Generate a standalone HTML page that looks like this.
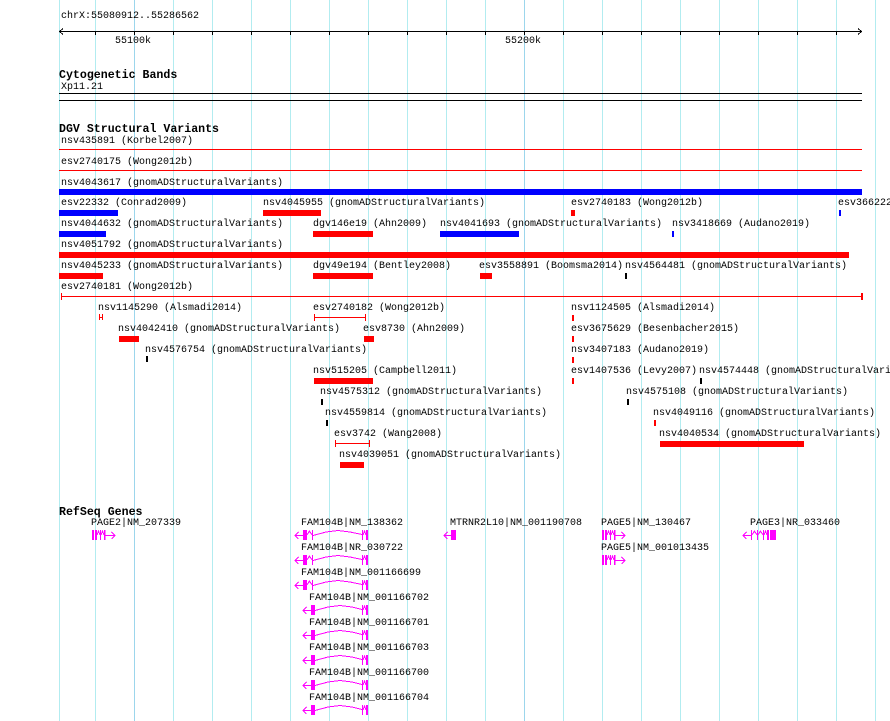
<!DOCTYPE html>
<html><head><meta charset="utf-8"><style>
html,body{margin:0;padding:0;background:#fff;}
body{width:890px;height:721px;position:relative;overflow:hidden;font-family:"Liberation Mono",monospace;font-size:10px;color:#000;}
.t{position:absolute;line-height:12px;white-space:nowrap;margin-top:2px;}
.h{position:absolute;line-height:14px;white-space:nowrap;font-weight:bold;font-size:11.6px;margin-top:2px;}
.b{position:absolute;}
.g{position:absolute;top:0;height:721px;width:1px;background:#b2ecf0;}
.G{position:absolute;top:0;height:721px;width:1px;background:#9cd6ec;}
.r{background:#f00}.u{background:#00f}.k{background:#000}
</style></head><body>
<div class="g" style="left:59px"></div>
<div class="g" style="left:95px"></div>
<div class="G" style="left:134px"></div>
<div class="g" style="left:173px"></div>
<div class="g" style="left:212px"></div>
<div class="g" style="left:251px"></div>
<div class="g" style="left:290px"></div>
<div class="g" style="left:329px"></div>
<div class="g" style="left:368px"></div>
<div class="g" style="left:407px"></div>
<div class="g" style="left:446px"></div>
<div class="g" style="left:485px"></div>
<div class="G" style="left:524px"></div>
<div class="g" style="left:563px"></div>
<div class="g" style="left:602px"></div>
<div class="g" style="left:641px"></div>
<div class="g" style="left:680px"></div>
<div class="g" style="left:719px"></div>
<div class="g" style="left:758px"></div>
<div class="g" style="left:797px"></div>
<div class="g" style="left:836px"></div>
<div class="g" style="left:875px"></div>

<svg class="b" style="left:0;top:0" width="890" height="721">
<g stroke="#000" stroke-width="1" fill="none" shape-rendering="crispEdges">
<line x1="59" y1="31.5" x2="862" y2="31.5"/>
<polyline points="63,28.5 59.5,31.5 63,34.5"/>
<polyline points="858,28.5 861.5,31.5 858,34.5"/>
<path d="M95.5 32v3M134.5 32v3M173.5 32v3M212.5 32v3M251.5 32v3M290.5 32v3M329.5 32v3M368.5 32v3M407.5 32v3M446.5 32v3M485.5 32v3M524.5 32v3M563.5 32v3M602.5 32v3M641.5 32v3M680.5 32v3M719.5 32v3M758.5 32v3M797.5 32v3M836.5 32v3"/>
</g>
<g fill="#f0f" stroke="#f0f" stroke-width="1" shape-rendering="crispEdges">
<g><rect x="92" y="530" width="2" height="10" stroke="none"/><rect x="95" y="530" width="2" height="10" stroke="none"/><polyline fill="none" points="97,535 98.5,531 100,535"/><rect x="100" y="530" width="1" height="10" stroke="none"/><polyline fill="none" points="101,535 102.5,531 104,535"/><rect x="104" y="530" width="1.5" height="10" stroke="none"/><line x1="105" y1="535.5" x2="115" y2="535.5"/><polyline fill="none" points="111.5,532 115,535.5 111.5,539"/></g>
<g id="p5"><rect x="602" y="530" width="2" height="10" stroke="none"/><rect x="605" y="530" width="2" height="10" stroke="none"/><polyline fill="none" points="607,535 608.5,531 610,535"/><rect x="610" y="530" width="1" height="10" stroke="none"/><polyline fill="none" points="611,535 612.5,531 614,535"/><rect x="614" y="530" width="1.5" height="10" stroke="none"/><line x1="615" y1="535.5" x2="625" y2="535.5"/><polyline fill="none" points="621.5,532 625,535.5 621.5,539"/></g>
<use href="#p5" y="25"/>
<g><line x1="743" y1="535.5" x2="751" y2="535.5"/><polyline fill="none" points="746.5,532 743,535.5 746.5,539"/><rect x="751" y="530" width="1" height="10" stroke="none"/><polyline fill="none" points="752,535 754.5,531 757,535"/><rect x="757" y="530" width="1" height="10" stroke="none"/><polyline fill="none" points="758,535 760.5,531 763,535"/><rect x="763" y="530" width="1" height="10" stroke="none"/><polyline fill="none" points="764,535 765.5,531 767,535"/><rect x="767" y="530" width="2" height="10" stroke="none"/><rect x="770" y="530" width="6" height="10" stroke="none"/></g>
<g><line x1="444" y1="535.5" x2="451" y2="535.5"/><polyline fill="none" points="447.5,532 444,535.5 447.5,539"/><rect x="451" y="530" width="5" height="10" stroke="none"/></g>
<g id="fa"><line x1="295" y1="535.5" x2="303" y2="535.5"/><polyline fill="none" points="298.5,532 295,535.5 298.5,539"/><rect x="303" y="530" width="4" height="10" stroke="none"/><polyline fill="none" points="307,535 309.5,531 312,535"/><rect x="312" y="530" width="1" height="10" stroke="none"/><polyline fill="none" points="313,535.5 326,532 338,530.5 350,532 362,534.5"/><rect x="362" y="530" width="1" height="10" stroke="none"/><polyline fill="none" points="363,535 364.5,531 366,535"/><rect x="366" y="530" width="2" height="10" stroke="none"/></g>
<use href="#fa" y="25"/><use href="#fa" y="50"/>
<g id="fb"><line x1="303" y1="610.5" x2="311" y2="610.5"/><polyline fill="none" points="306.5,607 303,610.5 306.5,614" /><rect x="311" y="605" width="4" height="10" stroke="none"/><polyline fill="none" points="315,610.5 328,607 340,605.5 352,607 362,609.5"/><rect x="362" y="605" width="1" height="10" stroke="none"/><polyline fill="none" points="363,610 364.5,606 366,610"/><rect x="366" y="605" width="2" height="10" stroke="none"/></g>
<use href="#fb" y="25"/><use href="#fb" y="50"/><use href="#fb" y="75"/><use href="#fb" y="100"/>
</g>
</svg>

<div class="t" style="left:61px;top:9px">chrX:55080912..55286562</div>
<div class="t" style="left:115px;top:34px">55100k</div>
<div class="t" style="left:505px;top:34px">55200k</div>

<div class="h" style="left:59px;top:67px">Cytogenetic Bands</div>
<div class="t" style="left:61px;top:80px">Xp11.21</div>
<div class="b k" style="left:59px;top:93px;width:803px;height:1px"></div>
<div class="b k" style="left:59px;top:100px;width:803px;height:1px"></div>

<div class="h" style="left:59px;top:121px">DGV Structural Variants</div>
<div class="t" style="left:61px;top:134px">nsv435891 (Korbel2007)</div>
<div class="b r" style="left:59px;top:149px;width:803px;height:1px"></div>
<div class="t" style="left:61px;top:155px">esv2740175 (Wong2012b)</div>
<div class="b r" style="left:59px;top:170px;width:803px;height:1px"></div>
<div class="t" style="left:61px;top:176px">nsv4043617 (gnomADStructuralVariants)</div>
<div class="b u" style="left:59px;top:189px;width:803px;height:6px"></div>

<div class="t" style="left:61px;top:196px">esv22332 (Conrad2009)</div>
<div class="b u" style="left:59px;top:210px;width:59px;height:6px"></div>
<div class="t" style="left:263px;top:196px">nsv4045955 (gnomADStructuralVariants)</div>
<div class="b r" style="left:263px;top:210px;width:58px;height:6px"></div>
<div class="t" style="left:571px;top:196px">esv2740183 (Wong2012b)</div>
<div class="b r" style="left:571px;top:210px;width:4px;height:6px"></div>
<div class="t" style="left:838px;top:196px">esv366222</div>
<div class="b u" style="left:839px;top:210px;width:2px;height:6px"></div>

<div class="t" style="left:61px;top:217px">nsv4044632 (gnomADStructuralVariants)</div>
<div class="b u" style="left:59px;top:231px;width:47px;height:6px"></div>
<div class="t" style="left:313px;top:217px">dgv146e19 (Ahn2009)</div>
<div class="b r" style="left:313px;top:231px;width:60px;height:6px"></div>
<div class="t" style="left:440px;top:217px">nsv4041693 (gnomADStructuralVariants)</div>
<div class="b u" style="left:440px;top:231px;width:79px;height:6px"></div>
<div class="t" style="left:672px;top:217px">nsv3418669 (Audano2019)</div>
<div class="b u" style="left:672px;top:231px;width:2px;height:6px"></div>

<div class="t" style="left:61px;top:238px">nsv4051792 (gnomADStructuralVariants)</div>
<div class="b r" style="left:59px;top:252px;width:790px;height:6px"></div>

<div class="t" style="left:61px;top:259px">nsv4045233 (gnomADStructuralVariants)</div>
<div class="b r" style="left:59px;top:273px;width:44px;height:6px"></div>
<div class="t" style="left:313px;top:259px">dgv49e194 (Bentley2008)</div>
<div class="b r" style="left:313px;top:273px;width:60px;height:6px"></div>
<div class="t" style="left:479px;top:259px">esv3558891 (Boomsma2014)</div>
<div class="b r" style="left:480px;top:273px;width:12px;height:6px"></div>
<div class="t" style="left:625px;top:259px">nsv4564481 (gnomADStructuralVariants)</div>
<div class="b k" style="left:625px;top:273px;width:2px;height:6px"></div>

<div class="t" style="left:61px;top:280px">esv2740181 (Wong2012b)</div>
<div class="b r" style="left:61px;top:296px;width:801px;height:1px"></div>
<div class="b r" style="left:61px;top:293px;width:1px;height:7px"></div>
<div class="b r" style="left:861px;top:293px;width:2px;height:7px"></div>

<div class="t" style="left:98px;top:301px">nsv1145290 (Alsmadi2014)</div>
<div class="b r" style="left:99px;top:314px;width:1px;height:6px"></div>
<div class="b r" style="left:102px;top:314px;width:1px;height:6px"></div>
<div class="b r" style="left:99px;top:317px;width:4px;height:1px"></div>
<div class="t" style="left:313px;top:301px">esv2740182 (Wong2012b)</div>
<div class="b r" style="left:314px;top:317px;width:52px;height:1px"></div>
<div class="b r" style="left:314px;top:314px;width:1px;height:7px"></div>
<div class="b r" style="left:365px;top:314px;width:1px;height:7px"></div>
<div class="t" style="left:571px;top:301px">nsv1124505 (Alsmadi2014)</div>
<div class="b r" style="left:572px;top:315px;width:2px;height:6px"></div>

<div class="t" style="left:118px;top:322px">nsv4042410 (gnomADStructuralVariants)</div>
<div class="b r" style="left:119px;top:336px;width:20px;height:6px"></div>
<div class="t" style="left:363px;top:322px">esv8730 (Ahn2009)</div>
<div class="b r" style="left:364px;top:336px;width:10px;height:6px"></div>
<div class="t" style="left:571px;top:322px">esv3675629 (Besenbacher2015)</div>
<div class="b r" style="left:572px;top:336px;width:2px;height:6px"></div>

<div class="t" style="left:145px;top:343px">nsv4576754 (gnomADStructuralVariants)</div>
<div class="b k" style="left:146px;top:356px;width:2px;height:6px"></div>
<div class="t" style="left:571px;top:343px">nsv3407183 (Audano2019)</div>
<div class="b r" style="left:572px;top:357px;width:2px;height:6px"></div>

<div class="t" style="left:313px;top:364px">nsv515205 (Campbell2011)</div>
<div class="b r" style="left:314px;top:378px;width:59px;height:6px"></div>
<div class="t" style="left:571px;top:364px">esv1407536 (Levy2007)</div>
<div class="b r" style="left:572px;top:378px;width:2px;height:6px"></div>
<div class="t" style="left:699px;top:364px">nsv4574448 (gnomADStructuralVariants)</div>
<div class="b k" style="left:700px;top:378px;width:2px;height:6px"></div>

<div class="t" style="left:320px;top:385px">nsv4575312 (gnomADStructuralVariants)</div>
<div class="b k" style="left:321px;top:399px;width:2px;height:6px"></div>
<div class="t" style="left:626px;top:385px">nsv4575108 (gnomADStructuralVariants)</div>
<div class="b k" style="left:627px;top:399px;width:2px;height:6px"></div>

<div class="t" style="left:325px;top:406px">nsv4559814 (gnomADStructuralVariants)</div>
<div class="b k" style="left:326px;top:420px;width:2px;height:6px"></div>
<div class="t" style="left:653px;top:406px">nsv4049116 (gnomADStructuralVariants)</div>
<div class="b r" style="left:654px;top:420px;width:2px;height:6px"></div>

<div class="t" style="left:334px;top:427px">esv3742 (Wang2008)</div>
<div class="b r" style="left:335px;top:443px;width:35px;height:1px"></div>
<div class="b r" style="left:335px;top:440px;width:1px;height:7px"></div>
<div class="b r" style="left:369px;top:440px;width:1px;height:7px"></div>
<div class="t" style="left:659px;top:427px">nsv4040534 (gnomADStructuralVariants)</div>
<div class="b r" style="left:660px;top:441px;width:144px;height:6px"></div>

<div class="t" style="left:339px;top:448px">nsv4039051 (gnomADStructuralVariants)</div>
<div class="b r" style="left:340px;top:462px;width:24px;height:6px"></div>

<div class="h" style="left:59px;top:504px">RefSeq Genes</div>
<div class="t" style="left:91px;top:516px">PAGE2|NM_207339</div>
<div class="t" style="left:301px;top:516px">FAM104B|NM_138362</div>
<div class="t" style="left:450px;top:516px">MTRNR2L10|NM_001190708</div>
<div class="t" style="left:601px;top:516px">PAGE5|NM_130467</div>
<div class="t" style="left:750px;top:516px">PAGE3|NR_033460</div>
<div class="t" style="left:301px;top:541px">FAM104B|NR_030722</div>
<div class="t" style="left:601px;top:541px">PAGE5|NM_001013435</div>
<div class="t" style="left:301px;top:566px">FAM104B|NM_001166699</div>
<div class="t" style="left:309px;top:591px">FAM104B|NM_001166702</div>
<div class="t" style="left:309px;top:616px">FAM104B|NM_001166701</div>
<div class="t" style="left:309px;top:641px">FAM104B|NM_001166703</div>
<div class="t" style="left:309px;top:666px">FAM104B|NM_001166700</div>
<div class="t" style="left:309px;top:691px">FAM104B|NM_001166704</div>
</body></html>
